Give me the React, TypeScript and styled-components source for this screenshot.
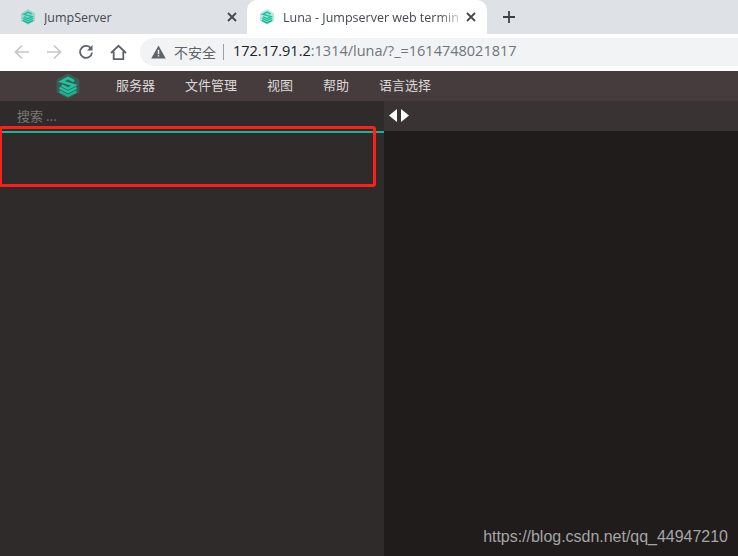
import styled, { createGlobalStyle } from 'styled-components'

const GlobalStyle = createGlobalStyle`
  html, body {
    margin: 0;
    padding: 0;
    height: 100%;
    overflow: hidden;
  }
  #root {
    height: 100%;
  }
`

const Page = styled.div`
  position: relative;
  width: 738px;
  height: 556px;
  display: flex;
  flex-direction: column;
  overflow: hidden;
  font-family: "Noto Sans CJK SC", "Liberation Sans", sans-serif;
`

const TabStrip = styled.div`
  height: 34px;
  flex: none;
  display: flex;
  background: #dee1e6;
`

const Tab = styled.div<{ $active?: boolean }>`
  position: relative;
  width: ${(p) => (p.$active ? '240px' : '247px')};
  height: 34px;
  box-sizing: border-box;
  padding: ${(p) => (p.$active ? '0 11px 0 12px' : '0 10px 0 20px')};
  display: flex;
  align-items: center;
  background: ${(p) => (p.$active ? '#fff' : 'transparent')};
  border-radius: ${(p) => (p.$active ? '10px 10px 0 0' : '0 0 10px 0')};
`

const TabTitle = styled.span<{ $fade?: boolean }>`
  flex: 1;
  margin-left: 8px;
  overflow: hidden;
  white-space: nowrap;
  font-family: "Open Sans", "Liberation Sans", sans-serif;
  font-size: 12.5px;
  color: #45494e;
  mask-image: ${(p) => (p.$fade ? 'linear-gradient(to right, #000 85%, transparent 100%)' : 'none')};
`

const NewTab = styled.div`
  width: 44px;
  display: flex;
  align-items: center;
  justify-content: center;
`

const Toolbar = styled.div`
  height: 36px;
  flex: none;
  display: flex;
  align-items: center;
  background: #fff;
  padding-left: 6px;
`

const NavButton = styled.div`
  width: 32px;
  height: 28px;
  display: flex;
  align-items: center;
  justify-content: center;
`

const NavButtons = styled.div`
  display: flex;
  width: 134px;
  flex: none;
`

const Omnibox = styled.div`
  flex: 1;
  height: 28px;
  display: flex;
  align-items: center;
  background: #f1f3f4;
  border-radius: 14px 0 0 14px;
  padding-left: 11px;
`

const Insecure = styled.span`
  margin-left: 8px;
  font-size: 14px;
  line-height: 20px;
  padding-bottom: 1px;
  color: #5f6368;
`

const UrlDivider = styled.span`
  width: 1px;
  height: 16px;
  margin: 0 9px 0 7px;
  background: #9aa0a6;
`

const Url = styled.span`
  font-family: "Open Sans", "Liberation Sans", sans-serif;
  font-size: 14.5px;
  line-height: 20px;
  padding-bottom: 2px;
  color: #70757a;
  white-space: nowrap;
`

const Host = styled.span`
  color: #202124;
`

const NavBar = styled.div`
  height: 30px;
  flex: none;
  margin-top: 1px;
  display: flex;
  align-items: center;
  background: #463c3d;
  padding-left: 55px;
`

const Menu = styled.div`
  display: flex;
  gap: 30px;
  margin-left: 35px;
  padding-bottom: 3px;
`

const MenuItem = styled.span`
  font-size: 13px;
  line-height: 18px;
  color: #dcd9d9;
  white-space: nowrap;
`

const Workspace = styled.div`
  flex: 1;
  display: flex;
  min-height: 0;
`

const LeftPane = styled.div`
  width: 384px;
  flex: none;
  background: #2f2b2a;
`

const SearchRow = styled.div`
  height: 30px;
  box-sizing: border-box;
  padding: 0 0 2px 17px;
  display: flex;
  align-items: center;
  font-size: 13px;
  color: #7a7675;
`

const GreenRule = styled.div`
  height: 2px;
  background: #1ab394;
`

const RightPane = styled.div`
  flex: 1;
  display: flex;
  flex-direction: column;
  background: #1f1c1b;
`

const TermTabs = styled.div`
  height: 30px;
  flex: none;
  display: flex;
  align-items: center;
  gap: 4px;
  padding: 0 0 1px 5px;
  box-sizing: border-box;
  background: #3a3333;
`

const Annotation = styled.div`
  position: absolute;
  left: -1px;
  top: 126px;
  width: 377px;
  height: 61px;
  box-sizing: border-box;
  border: 3px solid #ff1f1a;
  border-radius: 3px;
`

const Watermark = styled.div`
  position: absolute;
  right: 10px;
  top: 528px;
  font-family: "Liberation Sans", Arial, sans-serif;
  font-size: 16px;
  letter-spacing: -0.02px;
  color: #a5a5a5;
`

function Logo({ size }: { size: number }) {
  return (
    <svg width={size} height={size} viewBox="0 0 24 24" fill="none">
      <path d="M12 0.5 22.5 6.2V17.8L12 23.5 1.5 17.8V6.2Z" fill="#1ab394" opacity="0.3" />
      <path d="M17.5 7.6 12 4.6 6 7.8 17.8 11.4 12 14.4 6.2 11.4" stroke="#20c29f" strokeWidth="2.4" />
      <path d="M4.2 13.6 12 17.6 19.8 13.6" stroke="#20c29f" strokeWidth="2.2" />
      <path d="M4.2 17 12 21 19.8 17" stroke="#1ab394" strokeWidth="2.2" />
    </svg>
  )
}

function CloseIcon() {
  return (
    <svg width="10" height="10" viewBox="0 0 10 10">
      <path d="M1 1 9 9M9 1 1 9" stroke="#45494e" strokeWidth="1.8" />
    </svg>
  )
}

function App() {
  return (
    <Page>
      <GlobalStyle />
      <TabStrip>
        <Tab>
          <Logo size={16} />
          <TabTitle>JumpServer</TabTitle>
          <CloseIcon />
        </Tab>
        <Tab $active>
          <Logo size={16} />
          <TabTitle $fade>Luna - Jumpserver web termin</TabTitle>
          <CloseIcon />
        </Tab>
        <NewTab>
          <svg width="12" height="12" viewBox="0 0 12 12">
            <path d="M6 0V12M0 6H12" stroke="#3c4043" strokeWidth="1.8" />
          </svg>
        </NewTab>
      </TabStrip>
      <Toolbar>
        <NavButtons>
          <NavButton>
            <svg width="16" height="16" viewBox="0 0 16 16" fill="none">
              <path d="M15 8H2M8 1.5 1.5 8 8 14.5" stroke="#c4c6c9" strokeWidth="1.7" />
            </svg>
          </NavButton>
          <NavButton>
            <svg width="16" height="16" viewBox="0 0 16 16" fill="none">
              <path d="M1 8H14M8 1.5 14.5 8 8 14.5" stroke="#c4c6c9" strokeWidth="1.7" />
            </svg>
          </NavButton>
          <NavButton>
            <svg width="16" height="16" viewBox="0 0 16 16" fill="none">
              <path d="M13.3 5A6 6 0 1 0 14 8.5" stroke="#5f6368" strokeWidth="1.8" />
              <path d="M14.5 1V6.5H9Z" fill="#5f6368" />
            </svg>
          </NavButton>
          <NavButton>
            <svg width="17" height="17" viewBox="0 0 17 17" fill="none">
              <path d="M1 9 8.5 1.8 16 9M3.7 7.5V15.2H13.3V7.5" stroke="#5f6368" strokeWidth="1.8" />
            </svg>
          </NavButton>
        </NavButtons>
        <Omnibox>
          <svg width="15" height="14" viewBox="0 0 15 14">
            <path d="M7.5 0.5 14.8 13.5H0.2Z" fill="#5f6368" />
            <path d="M6.8 4.8H8.2V9.2H6.8ZM6.8 10.2H8.2V11.6H6.8Z" fill="#f1f3f4" />
          </svg>
          <Insecure>不安全</Insecure>
          <UrlDivider />
          <Url>
            <Host>172.17.91.2</Host>:1314/luna/?_=1614748021817
          </Url>
        </Omnibox>
      </Toolbar>
      <NavBar>
        <Logo size={26} />
        <Menu>
          <MenuItem>服务器</MenuItem>
          <MenuItem>文件管理</MenuItem>
          <MenuItem>视图</MenuItem>
          <MenuItem>帮助</MenuItem>
          <MenuItem>语言选择</MenuItem>
        </Menu>
      </NavBar>
      <Workspace>
        <LeftPane>
          <SearchRow>搜索 ...</SearchRow>
          <GreenRule />
        </LeftPane>
        <RightPane>
          <TermTabs>
            <svg width="8" height="13" viewBox="0 0 8 13">
              <path d="M8 0V13L0 6.5Z" fill="#fff" />
            </svg>
            <svg width="8" height="13" viewBox="0 0 8 13">
              <path d="M0 0V13L8 6.5Z" fill="#fff" />
            </svg>
          </TermTabs>
        </RightPane>
      </Workspace>
      <Annotation />
      <Watermark>https://blog.csdn.net/qq_44947210</Watermark>
    </Page>
  )
}

export default App
